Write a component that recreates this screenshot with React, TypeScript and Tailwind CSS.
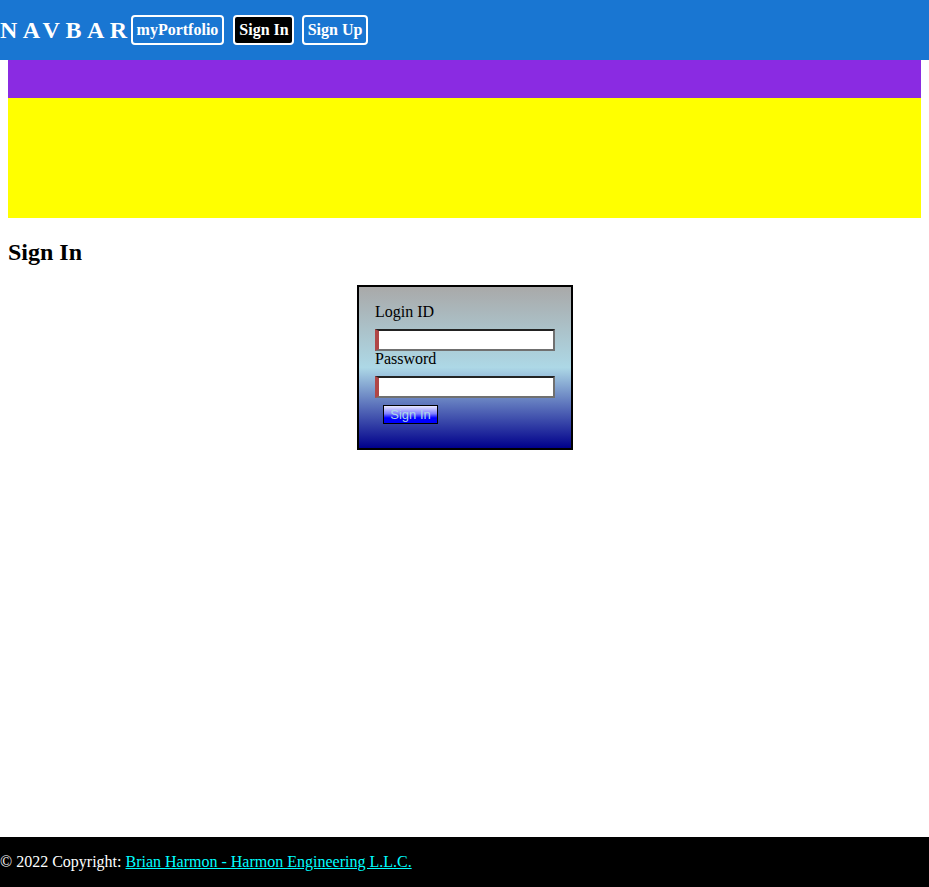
import React from "react";

export default function App() {
  return (
    <div className="min-h-[887px] flex flex-col bg-white text-black" style={{ fontFamily: '"Liberation Serif", "Times New Roman", serif' }}>
      <nav className="h-[60px] bg-[#1976d2] flex items-center">
        <span className="text-white font-bold text-[24px] tracking-[5.5px] leading-none mr-[3px]">NAVBAR</span>
        <div className="flex items-center gap-[8px] ml-[-5px]">
          <a className="h-[30px] px-[4px] flex items-center border-2 border-white rounded-[4px] text-white font-bold text-[16px]">myPortfolio</a>
          <a className="h-[30px] pl-[4px] pr-[3px] flex items-center border-2 border-white rounded-[4px] bg-black text-white font-bold text-[16px] ml-[1px]">Sign In</a>
          <a className="h-[30px] px-[4px] flex items-center border-2 border-white rounded-[4px] text-white font-bold text-[16px]">Sign Up</a>
        </div>
      </nav>
      <div className="mx-[8px] h-[38px] bg-[#8a2be2]" />
      <div className="mx-[8px] h-[120px] bg-[#ffff00]" />
      <h2 className="mx-[8px] mt-[20px] text-[24px] font-bold leading-[28px]">Sign In</h2>
      <div className="flex justify-center mt-[19px] pl-[1px]">
        <div className="w-[216px] h-[165px] border-2 border-black bg-[linear-gradient(to_bottom,#a9a9a9_0%,#add8e6_50%,#00008b_100%)] pl-[16px] pt-[16px]">
          <div className="text-[16px] leading-[18px]">Login ID</div>
          <input className="block mt-[8px] w-[180px] h-[22px] bg-white border-t-2 border-t-[#222] border-r-2 border-r-[#707070] border-b-2 border-b-[#707070] border-l-4 border-l-[#b04646] outline-none" />
          <div className="text-[16px] leading-[18px] mt-[-1px]">Password</div>
          <input type="password" className="block mt-[8px] w-[180px] h-[22px] bg-white border-t-2 border-t-[#222] border-r-2 border-r-[#707070] border-b-2 border-b-[#707070] border-l-4 border-l-[#b04646] outline-none" />
          <button className="block mt-[7px] ml-[8px] w-[55px] h-[19px] border border-black bg-[linear-gradient(to_bottom,#e8e8ff_0%,#8080ff_45%,#0000ff_70%,#0000ff_100%)] text-[#add8e6] text-[13px] leading-none" style={{ fontFamily: '"Liberation Sans", Arial, sans-serif' }}>Sign In</button>
        </div>
      </div>
      <div className="flex-1" />
      <footer className="h-[50px] bg-black text-white text-[16px] flex items-center">
        <span>© 2022 Copyright:&nbsp;</span>
        <a className="text-[#00ffff] underline">Brian Harmon - Harmon Engineering L.L.C.</a>
      </footer>
    </div>
  );
}
